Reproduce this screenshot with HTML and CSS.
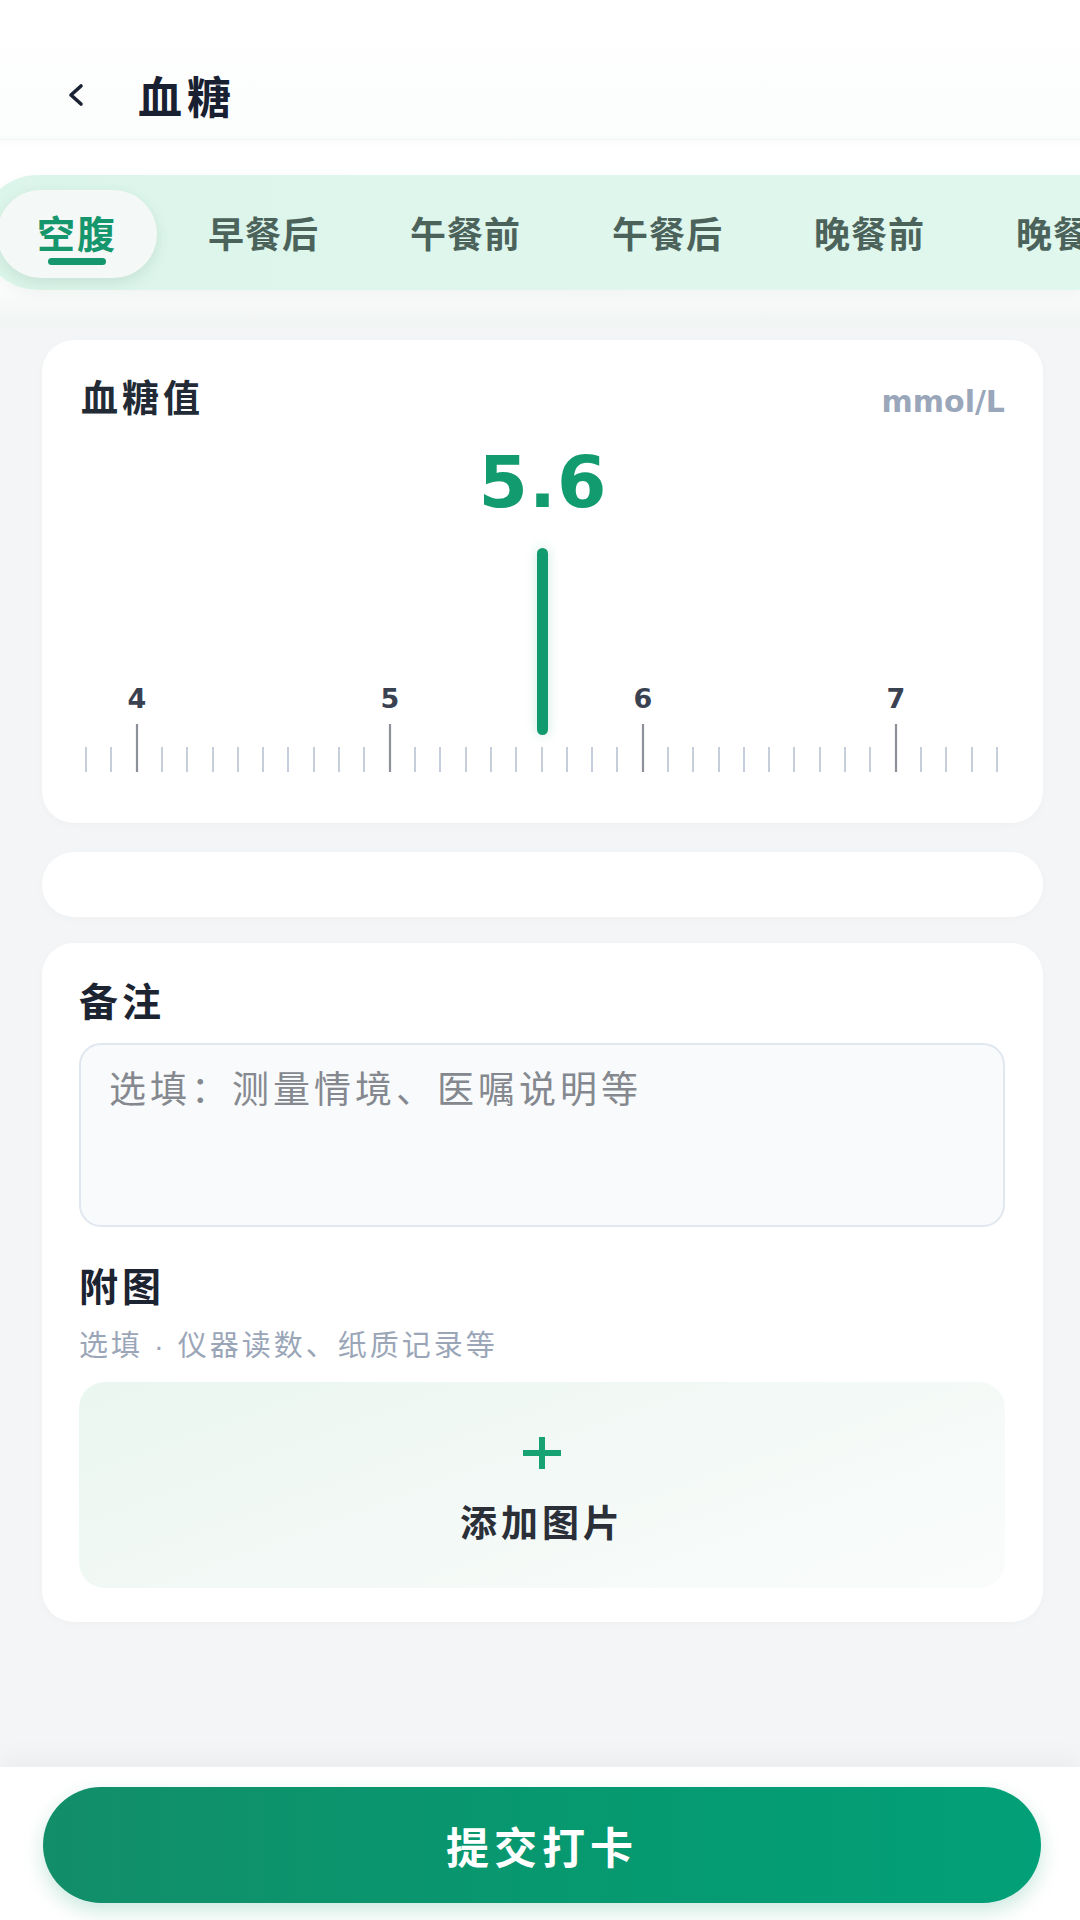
FILE: index.html
```html
<!DOCTYPE html>
<html lang="zh-CN">
<head>
<meta charset="utf-8">
<title>血糖</title>
<link rel="stylesheet" href="styles.css">
</head>
<body>
<div class="page">
  <header class="topbar">
    <svg class="back" width="20" height="24" viewBox="0 0 20 24"><path d="M15 3 L5 12 L15 21" fill="none" stroke="#1a2233" stroke-width="3.6" stroke-linecap="round" stroke-linejoin="round"/></svg>
    <h1 class="title">血糖</h1>
  </header>

  <section class="period">
    <nav class="tabs">
      <div class="tab active"><span class="tab-text">空腹</span><span class="tab-bar"></span></div>
      <div class="tab"><span class="tab-text">早餐后</span><span class="tab-bar"></span></div>
      <div class="tab"><span class="tab-text">午餐前</span><span class="tab-bar"></span></div>
      <div class="tab"><span class="tab-text">午餐后</span><span class="tab-bar"></span></div>
      <div class="tab"><span class="tab-text">晚餐前</span><span class="tab-bar"></span></div>
      <div class="tab"><span class="tab-text">晚餐后</span><span class="tab-bar"></span></div>
    </nav>
  </section>

  <main class="content">
    <section class="card value-card">
      <div class="card-head">
        <span class="card-title">血糖值</span>
        <span class="unit">mmol/L</span>
      </div>
      <div class="value">5.6</div>
      <svg class="ruler" width="923" height="226" viewBox="0 0 923 226">
        <g class="minor">
          <line x1="5" y1="199" x2="5" y2="224"/>
          <line x1="30" y1="199" x2="30" y2="224"/>
          <line x1="81" y1="199" x2="81" y2="224"/>
          <line x1="106" y1="199" x2="106" y2="224"/>
          <line x1="132" y1="199" x2="132" y2="224"/>
          <line x1="157" y1="199" x2="157" y2="224"/>
          <line x1="182" y1="199" x2="182" y2="224"/>
          <line x1="207" y1="199" x2="207" y2="224"/>
          <line x1="233" y1="199" x2="233" y2="224"/>
          <line x1="258" y1="199" x2="258" y2="224"/>
          <line x1="283" y1="199" x2="283" y2="224"/>
          <line x1="334" y1="199" x2="334" y2="224"/>
          <line x1="359" y1="199" x2="359" y2="224"/>
          <line x1="385" y1="199" x2="385" y2="224"/>
          <line x1="410" y1="199" x2="410" y2="224"/>
          <line x1="435" y1="199" x2="435" y2="224"/>
          <line x1="461" y1="199" x2="461" y2="224"/>
          <line x1="486" y1="199" x2="486" y2="224"/>
          <line x1="511" y1="199" x2="511" y2="224"/>
          <line x1="536" y1="199" x2="536" y2="224"/>
          <line x1="587" y1="199" x2="587" y2="224"/>
          <line x1="612" y1="199" x2="612" y2="224"/>
          <line x1="638" y1="199" x2="638" y2="224"/>
          <line x1="663" y1="199" x2="663" y2="224"/>
          <line x1="688" y1="199" x2="688" y2="224"/>
          <line x1="713" y1="199" x2="713" y2="224"/>
          <line x1="739" y1="199" x2="739" y2="224"/>
          <line x1="764" y1="199" x2="764" y2="224"/>
          <line x1="789" y1="199" x2="789" y2="224"/>
          <line x1="840" y1="199" x2="840" y2="224"/>
          <line x1="865" y1="199" x2="865" y2="224"/>
          <line x1="891" y1="199" x2="891" y2="224"/>
          <line x1="916" y1="199" x2="916" y2="224"/>
        </g>
        <g class="major">
          <line x1="56" y1="176" x2="56" y2="224"/>
          <line x1="309" y1="176" x2="309" y2="224"/>
          <line x1="562" y1="176" x2="562" y2="224"/>
          <line x1="815" y1="176" x2="815" y2="224"/>
        </g>
        <g class="labels">
          <text x="56" y="160">4</text>
          <text x="309" y="160">5</text>
          <text x="562" y="160">6</text>
          <text x="815" y="160">7</text>
        </g>
        <rect class="pointer" x="456" y="0" width="11" height="187" rx="5.5"/>
      </svg>
    </section>

    <section class="card blank-card"></section>

    <section class="card note-card">
      <h2 class="section-title">备注</h2>
      <div class="note-box"><span class="placeholder">选填：测量情境、医嘱说明等</span></div>
      <h2 class="section-title attach-title">附图</h2>
      <p class="hint">选填 · 仪器读数、纸质记录等</p>
      <div class="upload">
        <svg class="plus" width="42" height="34" viewBox="0 0 42 34"><path d="M21 1 V33 M2 17 H40" stroke="#17a273" stroke-width="6" fill="none"/></svg>
        <span class="upload-text">添加图片</span>
      </div>
    </section>
  </main>

  <footer class="bottombar">
    <button class="submit">提交打卡</button>
  </footer>
</div>
</body>
</html>
```

FILE: styles.css
```css
* { box-sizing: border-box; margin: 0; padding: 0; }

html, body {
  width: 1080px;
  height: 1920px;
  overflow: hidden;
}

body {
  background: #f3f5f7;
  font-family: "Noto Sans CJK SC", "Noto Sans", sans-serif;
  color: #1e2533;
}

.page {
  display: flex;
  flex-direction: column;
  height: 1920px;
}

/* Top bar */
.topbar {
  height: 140px;
  padding: 50px 0 0 66px;
  display: flex;
  align-items: center;
  background: linear-gradient(180deg, #ffffff 0%, #fbfdfc 100%);
  border-bottom: 1px solid #f0f3f2;
  box-shadow: 0 4px 10px rgba(0, 0, 0, 0.02);
  position: relative;
  z-index: 2;
}

.back {
  display: block;
  flex-shrink: 0;
}

.title {
  margin-left: 52px;
  font-size: 44px;
  font-weight: 700;
  letter-spacing: 5px;
  line-height: 56px;
  color: #182032;
}

/* Period tabs */
.period {
  padding: 35px 0 37px;
  background: linear-gradient(180deg, #ffffff 0%, #ffffff 72%, #f0f4f3 100%);
  overflow: hidden;
}

.tabs {
  display: flex;
  align-items: center;
  gap: 11px;
  height: 115px;
  margin-left: -20px;
  padding-left: 17px;
  border-radius: 58px 0 0 58px;
  background: linear-gradient(90deg, #dcf5ea 0%, #e0f7ee 100%);
  box-shadow: 0 4px 12px rgba(30, 90, 60, 0.05);
  white-space: nowrap;
  overflow: hidden;
}

.tab {
  flex-shrink: 0;
  height: 88px;
  margin-top: 2px;
  padding: 22px 40px 0;
  display: flex;
  flex-direction: column;
  align-items: center;
  border-radius: 44px;
}

.tab-text {
  font-size: 36px;
  line-height: 40px;
  font-weight: 700;
  letter-spacing: 1px;
  color: #4c635b;
}

.tab-bar {
  width: 58px;
  height: 7px;
  margin-top: 6px;
  border-radius: 4px;
}

.tab.active {
  background: #f4f8f6;
  box-shadow: 0 5px 14px rgba(20, 70, 45, 0.10);
}

.tab.active .tab-text {
  font-size: 38px;
  letter-spacing: 2px;
  color: #15966c;
}

.tab.active .tab-bar {
  background: #15966c;
}

/* Content */
.content {
  flex: 1;
  padding: 13px 37px 0 42px;
  display: flex;
  flex-direction: column;
  gap: 28px;
}

.card {
  background: #ffffff;
  border-radius: 32px;
  box-shadow: 0 2px 10px rgba(0, 0, 0, 0.025);
}

.value-card {
  height: 483px;
  padding: 32px 38px 0 39px;
}

.card-head {
  display: flex;
  justify-content: space-between;
  align-items: baseline;
  height: 48px;
}

.card-title {
  font-size: 37px;
  line-height: 48px;
  font-weight: 700;
  letter-spacing: 4px;
  color: #222a36;
}

.unit {
  font-family: "DejaVu Sans", sans-serif;
  font-size: 30px;
  font-weight: 700;
  color: #9aa6ba;
}

.value {
  margin-top: 28px;
  text-align: center;
  font-family: "DejaVu Sans", sans-serif;
  font-size: 71px;
  line-height: 70px;
  font-weight: 700;
  letter-spacing: 1px;
  color: #129b6f;
}

.ruler {
  display: block;
  margin-top: 30px;
  overflow: visible;
}

.ruler .minor line {
  stroke: #c7cedb;
  stroke-width: 2;
}

.ruler .major line {
  stroke: #8b9099;
  stroke-width: 2.2;
}

.ruler .labels text {
  font-family: "DejaVu Sans", sans-serif;
  font-size: 27px;
  font-weight: 700;
  fill: #3a4252;
  text-anchor: middle;
}

.ruler .pointer {
  fill: #109a6e;
  filter: drop-shadow(0 0 6px rgba(16, 154, 110, 0.22));
}

.blank-card {
  height: 65px;
  margin-top: 1px;
}

.note-card {
  margin-top: -2px;
  padding: 32px 38px 34px 37px;
}

.section-title {
  font-size: 39px;
  line-height: 48px;
  font-weight: 700;
  letter-spacing: 4px;
  color: #1c2331;
}

.note-box {
  margin-top: 20px;
  height: 184px;
  padding: 18px 28px;
  border: 2px solid #e1e7ef;
  border-radius: 22px;
  background: #f8fafc;
}

.placeholder {
  font-size: 37px;
  line-height: 48px;
  letter-spacing: 4px;
  color: #85898f;
}

.attach-title {
  margin-top: 33px;
}

.hint {
  margin-top: 20px;
  font-family: "Liberation Sans", "Noto Sans CJK SC", sans-serif;
  font-size: 29px;
  line-height: 36px;
  letter-spacing: 3px;
  color: #9aa6b8;
}

.upload {
  margin-top: 18px;
  height: 206px;
  padding-top: 54px;
  border-radius: 26px;
  background: linear-gradient(160deg, #eaf6f0 0%, #f3f9f6 50%, #fafcfb 100%);
  display: flex;
  flex-direction: column;
  align-items: center;
}

.plus {
  display: block;
}

.upload-text {
  margin-top: 29px;
  font-size: 37px;
  line-height: 44px;
  font-weight: 700;
  letter-spacing: 4px;
  color: #2a2f38;
}

/* Bottom bar */
.bottombar {
  height: 153px;
  padding: 20px 39px 0 43px;
  background: #ffffff;
  box-shadow: 0 -10px 24px rgba(0, 0, 0, 0.035);
}

.submit {
  display: block;
  width: 100%;
  height: 116px;
  border: none;
  border-radius: 58px;
  background: linear-gradient(90deg, #128e69 0%, #07986f 50%, #02a078 100%);
  box-shadow: 0 8px 20px rgba(16, 150, 110, 0.22);
  font-family: "Noto Sans CJK SC", sans-serif;
  font-size: 43px;
  font-weight: 700;
  letter-spacing: 5px;
  color: #ffffff;
}
```
